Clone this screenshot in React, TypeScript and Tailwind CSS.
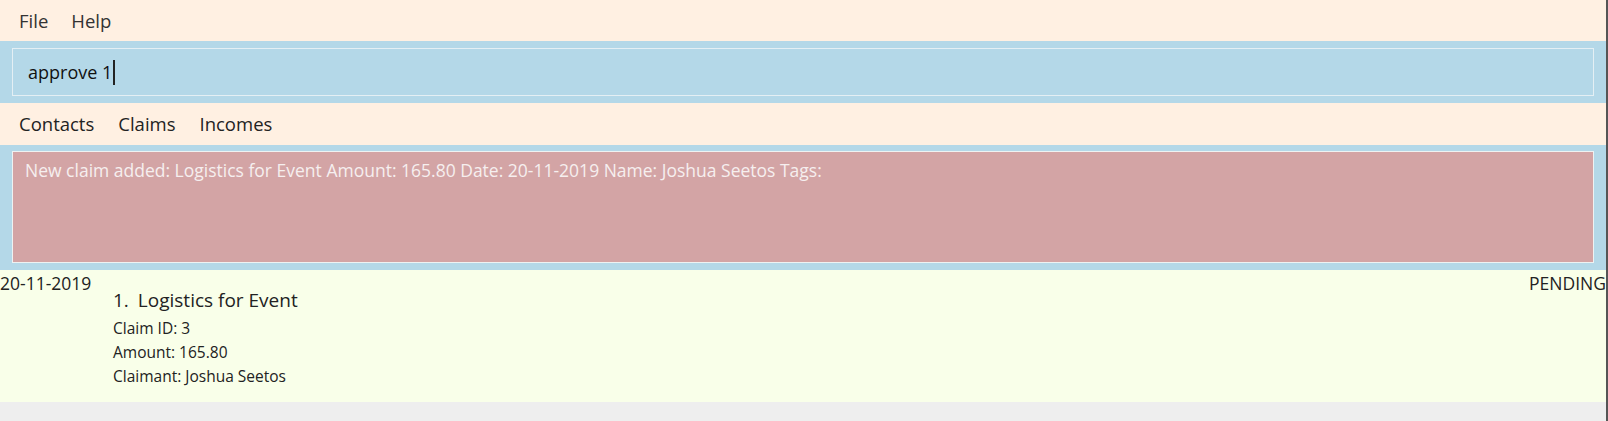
export default function App() {
  const font = { fontFamily: '"Open Sans", "Noto Sans", sans-serif' };
  return (
    <div className="flex h-[421px] w-[1608px] bg-[#eeeeee]" style={font}>
      <div className="flex flex-1 flex-col">
        <div className="flex h-[41px] items-center gap-[23px] bg-[#fff0e2] pl-[19px] text-[18.5px] text-[#333]">
          <span>File</span>
          <span>Help</span>
        </div>

        <div className="bg-[#b4d8e8] px-[12px] py-[7px]">
          <div className="flex h-[48px] items-center border border-[#e4eff4] pl-[15px] text-[18px] text-[#111]">
            <span>approve 1</span>
            <span className="ml-px h-[25px] w-[2px] bg-[#222]" />
          </div>
        </div>

        <div className="flex h-[42px] items-center gap-[24px] bg-[#fff0e2] pl-[19px] text-[18.5px] text-[#222]">
          <span>Contacts</span>
          <span>Claims</span>
          <span>Incomes</span>
        </div>

        <div className="bg-[#b4d8e8] px-[12px] pb-[7px] pt-[6px]">
          <div className="h-[112px] border border-[#eef2f2] bg-[#d3a4a5] px-[12px] pt-[5px] text-[17.5px] leading-[26px] text-[#f6efef]">
            New claim added: Logistics for Event Amount: 165.80 Date: 20-11-2019 Name: Joshua Seetos Tags:
          </div>
        </div>

        <div className="flex h-[132px] bg-[#f9ffe9] text-[#222]">
          <div className="w-[113px] text-[17.5px] leading-[26px]">20-11-2019</div>
          <div className="flex-1 pt-[16px]">
            <div className="text-[19px] leading-[28px]">
              <span>1.</span>
              <span className="ml-[9px]">Logistics for Event</span>
            </div>
            <div className="mt-[2px] text-[15.5px] leading-[24px]">
              <div>Claim ID: 3</div>
              <div>Amount: 165.80</div>
              <div>Claimant: Joshua Seetos</div>
            </div>
          </div>
          <div className="text-[17.5px] leading-[26px]">PENDING</div>
        </div>
      </div>
      <div className="w-[2px] bg-[#555]" />
    </div>
  );
}
